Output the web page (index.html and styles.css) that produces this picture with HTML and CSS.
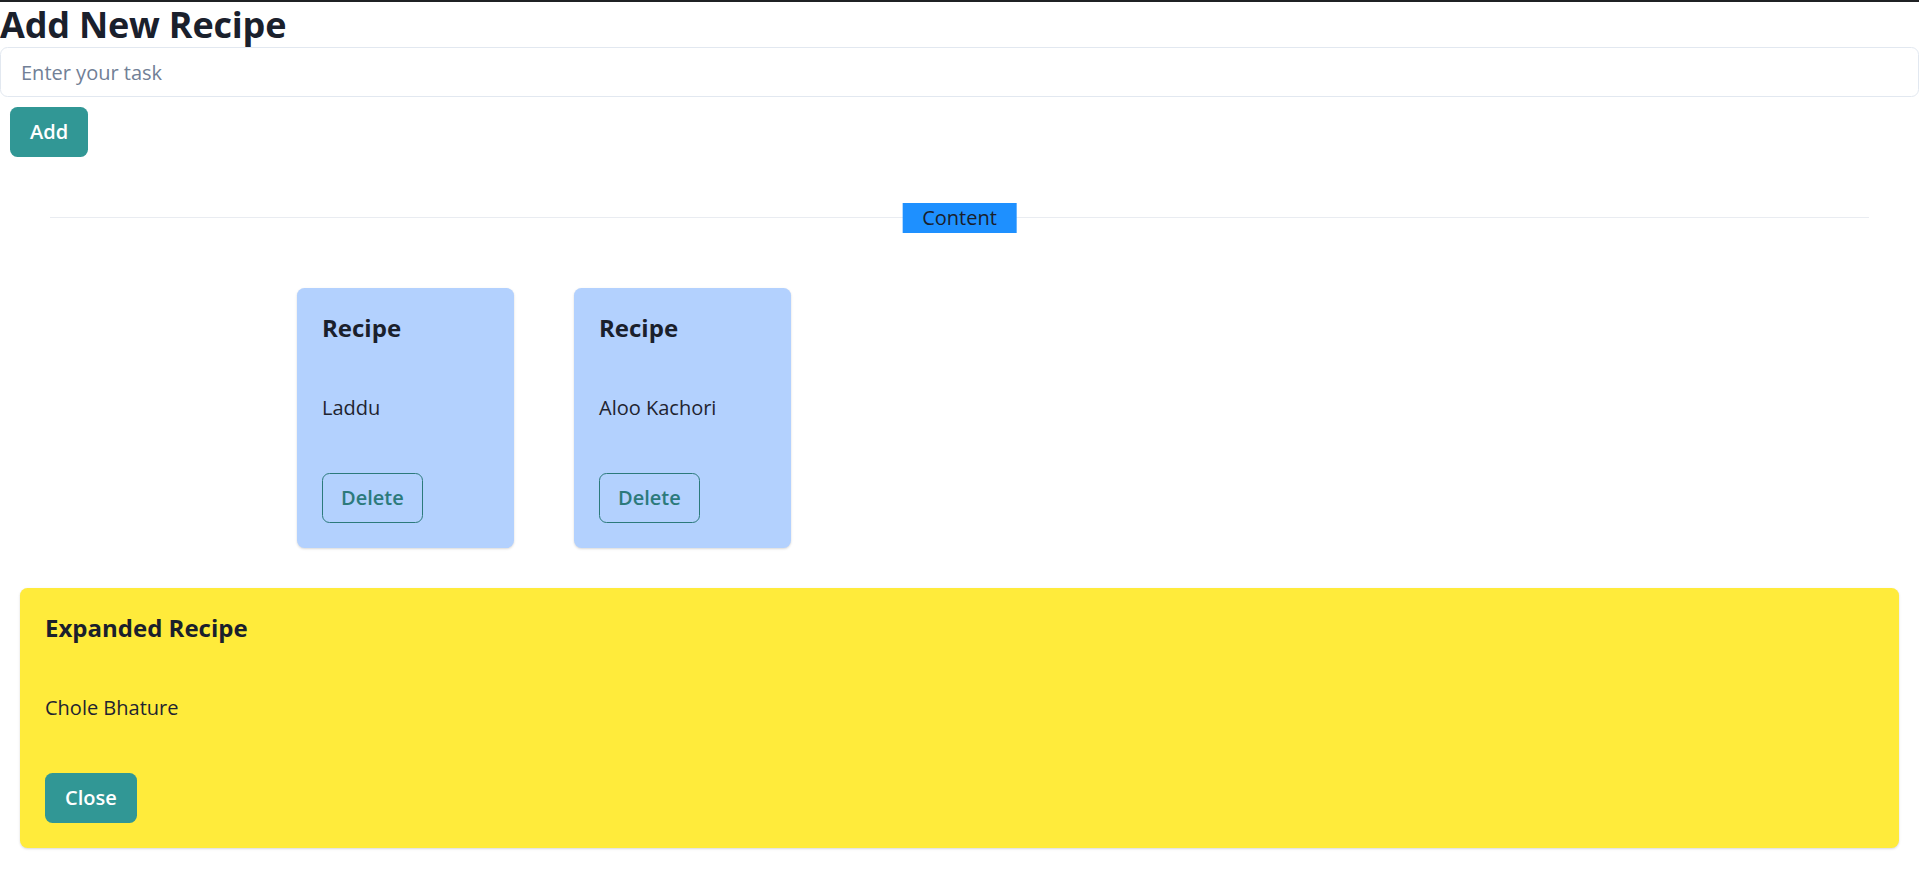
FILE: index.html
```html
<!DOCTYPE html>
<html lang="en">
<head>
<meta charset="utf-8">
<title>Add New Recipe</title>
<link rel="stylesheet" href="styles.css">
</head>
<body>
<div class="topbar"></div>
<main class="app">
  <h2 class="page-title">Add New Recipe</h2>
  <input class="task-input" type="text" placeholder="Enter your task">
  <button class="btn btn-solid add-btn" type="button">Add</button>

  <div class="divider-box">
    <hr class="divider">
    <span class="divider-label">Content</span>
  </div>

  <div class="card-list">
    <div class="card card-blue">
      <div class="card-section"><h3 class="card-title">Recipe</h3></div>
      <div class="card-section"><p class="card-text">Laddu</p></div>
      <div class="card-section"><button class="btn btn-outline" type="button">Delete</button></div>
    </div>
    <div class="card card-blue">
      <div class="card-section"><h3 class="card-title">Recipe</h3></div>
      <div class="card-section"><p class="card-text">Aloo Kachori</p></div>
      <div class="card-section"><button class="btn btn-outline" type="button">Delete</button></div>
    </div>
  </div>

  <div class="card card-yellow">
    <div class="card-section"><h3 class="card-title">Expanded Recipe</h3></div>
    <div class="card-section"><p class="card-text">Chole Bhature</p></div>
    <div class="card-section"><button class="btn btn-solid" type="button">Close</button></div>
  </div>
</main>
</body>
</html>
```

FILE: styles.css
```css
* { box-sizing: border-box; }

html, body {
  margin: 0;
  padding: 0;
  background: #ffffff;
}

body {
  font-family: "Open Sans", "Noto Sans", sans-serif;
  color: #1a202c;
  font-size: 20px;
  line-height: 1.5;
}

.topbar {
  height: 2px;
  background: #1f2124;
}

.app {
  display: flex;
  flex-direction: column;
  align-items: flex-start;
}

.page-title {
  margin: 0;
  font-size: 36px;
  line-height: 45px;
  font-weight: 700;
  color: #1a202c;
  letter-spacing: -0.2px;
}

.task-input {
  width: 100%;
  height: 50px;
  padding: 0 20px;
  border: 1px solid #e2e8f0;
  border-radius: 7.5px;
  font-family: inherit;
  font-size: 20px;
  color: #1a202c;
  background: #fff;
  outline: none;
}
.task-input::placeholder { color: #718096; }

.btn {
  height: 50px;
  padding: 0 20px;
  border-radius: 7.5px;
  font-family: inherit;
  font-size: 20px;
  font-weight: 600;
  line-height: 1.2;
  cursor: pointer;
}

.btn-solid {
  background: #319795;
  color: #ffffff;
  border: none;
}

.btn-outline {
  background: transparent;
  color: #2c7a7b;
  border: 1px solid #2c7a7b;
  padding: 0 18px;
}

.add-btn {
  margin: 10px;
}

.divider-box {
  align-self: stretch;
  position: relative;
  padding: 50px;
}

.divider {
  margin: 0;
  border: 0;
  border-top: 1px solid #e9ecf1;
}

.divider-label {
  position: absolute;
  left: 50%;
  top: 50%;
  transform: translate(-50%, -50%);
  background: #1e90ff;
  padding: 0 20px;
  line-height: 30px;
  font-size: 20px;
  color: #1a202c;
}

.card-list {
  display: flex;
  gap: 60px;
  margin: 20px 0 0 297px;
}

.card {
  border-radius: 7.5px;
  box-shadow: 0 1px 3px 0 rgba(0, 0, 0, 0.1), 0 1px 2px 0 rgba(0, 0, 0, 0.06);
  display: flex;
  flex-direction: column;
}

.card-blue {
  width: 217px;
  background: #b3d1fe;
}

.card-yellow {
  align-self: stretch;
  margin: 40px 20px 20px;
  background: #ffeb3b;
}

.card-section {
  padding: 25px;
}
.card-section + .card-section {
  padding-top: 0;
}

.card-title {
  margin: 0;
  font-size: 24px;
  line-height: 30px;
  font-weight: 700;
  color: #1a202c;
}

.card-text {
  margin: 25px 0;
  font-size: 20px;
  line-height: 30px;
  color: #1f2430;
}
```
